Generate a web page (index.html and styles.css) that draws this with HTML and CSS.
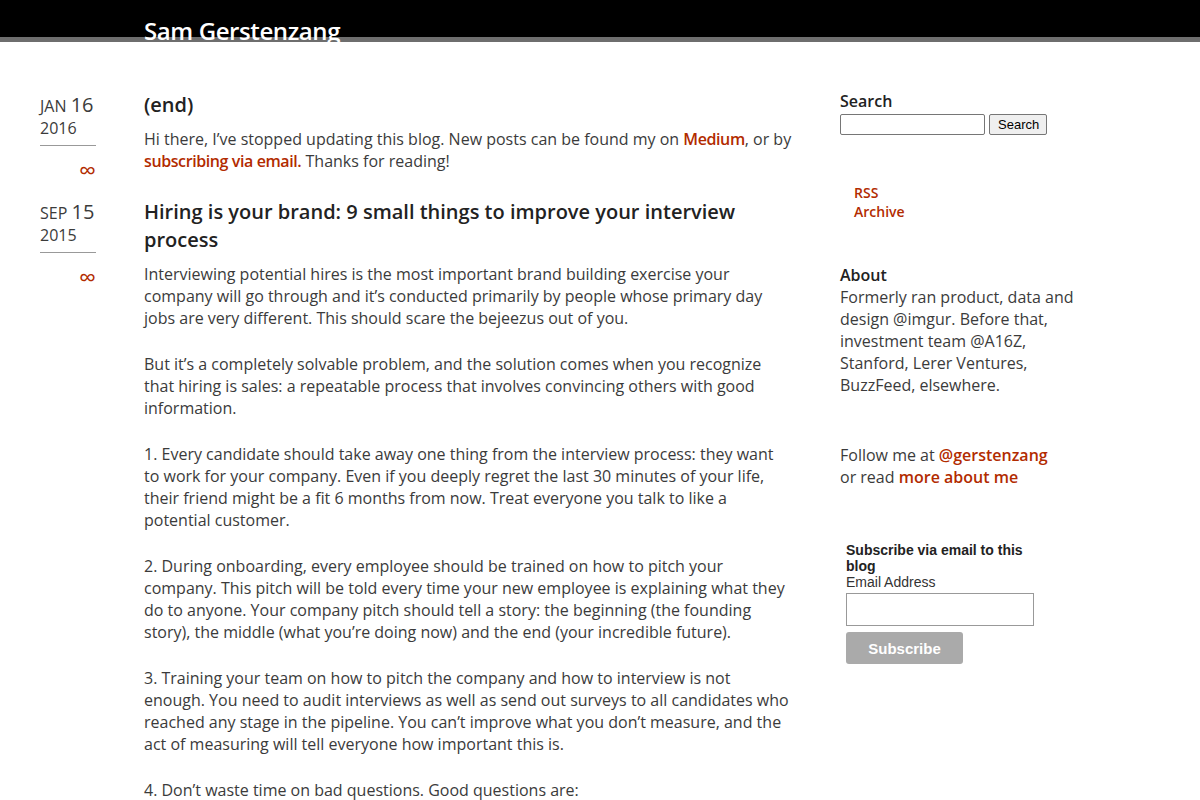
FILE: index.html
```html
<!DOCTYPE html>
<html lang="en">
<head>
    <meta charset="UTF-8">
    <meta name="viewport" content="width=device-width, initial-scale=1.0">
    <title>Sam Gerstenzang</title>
    <link rel="stylesheet" href="styles.css">
</head>
<body>
    <header class="masthead">
        <h1 class="site-title"><a href="/">Sam Gerstenzang</a></h1>
    </header>

    <div class="wrapper">
        <main class="posts">
            <article class="post">
                <div class="post-date">
                    <div class="date-box">
                        <span class="month">Jan</span> <span class="day">16</span><br>
                        <span class="year">2016</span>
                    </div>
                    <a class="permalink" href="#">&infin;</a>
                </div>
                <div class="post-body">
                    <h2>(end)</h2>
                    <p>Hi there, I’ve stopped updating this blog. New posts can be found my on <a href="#">Medium</a>, or by <a href="#">subscribing via email.</a> Thanks for reading!</p>
                </div>
            </article>

            <article class="post">
                <div class="post-date">
                    <div class="date-box">
                        <span class="month">Sep</span> <span class="day">15</span><br>
                        <span class="year">2015</span>
                    </div>
                    <a class="permalink" href="#">&infin;</a>
                </div>
                <div class="post-body">
                    <h2>Hiring is your brand: 9 small things to improve your interview process</h2>
                    <p>Interviewing potential hires is the most important brand building exercise your company will go through and it’s conducted primarily by people whose primary day jobs are very different. This should scare the bejeezus out of you.</p>
                    <p>But it’s a completely solvable problem, and the solution comes when you recognize that hiring is sales: a repeatable process that involves convincing others with good information.</p>
                    <p>1. Every candidate should take away one thing from the interview process: they want to work for your company. Even if you deeply regret the last 30 minutes of your life, their friend might be a fit 6 months from now. Treat everyone you talk to like a potential customer.</p>
                    <p>2. During onboarding, every employee should be trained on how to pitch your company. This pitch will be told every time your new employee is explaining what they do to anyone. Your company pitch should tell a story: the beginning (the founding story), the middle (what you’re doing now) and the end (your incredible future).</p>
                    <p>3. Training your team on how to pitch the company and how to interview is not enough. You need to audit interviews as well as send out surveys to all candidates who reached any stage in the pipeline. You can’t improve what you don’t measure, and the act of measuring will tell everyone how important this is.</p>
                    <p>4. Don’t waste time on bad questions. Good questions are:</p>
                </div>
            </article>
        </main>

        <aside class="sidebar">
            <section class="widget">
                <h3>Search</h3>
                <form class="search-form">
                    <input type="text" name="q">
                    <button type="submit">Search</button>
                </form>
            </section>

            <ul class="side-links">
                <li><a href="#">RSS</a></li>
                <li><a href="#">Archive</a></li>
            </ul>

            <section class="widget about">
                <h3>About</h3>
                <p>Formerly ran product, data and design @imgur. Before that, investment team @A16Z, Stanford, Lerer Ventures, BuzzFeed, elsewhere.</p>
            </section>

            <section class="widget follow">
                <p>Follow me at <a href="#">@gerstenzang</a><br>or read <a href="#">more about me</a></p>
            </section>

            <form class="subscribe">
                <h4>Subscribe via email to this blog</h4>
                <label for="email">Email Address</label>
                <input type="email" id="email" name="email">
                <button type="submit">Subscribe</button>
            </form>
        </aside>
    </div>
</body>
</html>
```

FILE: styles.css
```css
body {
    margin: 0;
    font-family: "Open Sans", sans-serif;
    font-size: 16px;
    line-height: 22px;
    color: #3b3b3b;
    background-color: #fff;
}

a {
    color: #b22b00;
    font-weight: 600;
    text-decoration: none;
}

/* header: black bar with a grey strip, title cut off at the bottom */
.masthead {
    height: 42px;
    overflow: hidden;
    background: linear-gradient(#000 37px, #6e6e6e 37px);
    padding-left: 144px;
}

.site-title {
    margin: 0;
    padding-top: 15px;
    font-size: 24px;
    line-height: 32px;
    font-weight: 600;
    letter-spacing: -0.4px;
}

.site-title a {
    color: #fff;
}

.wrapper {
    display: flex;
    padding: 47px 0 0 40px;
    gap: 48px;
}

.posts {
    width: 600px;
    flex: none;
    display: flex;
    flex-direction: column;
}

.post {
    display: grid;
    grid-template-columns: 56px 648px;
    gap: 48px;
}

.post-date {
    display: flex;
    flex-direction: column;
    padding-top: 5px;
}

.date-box {
    border-bottom: 1px solid #999;
    padding-bottom: 6px;
    text-transform: uppercase;
}

.month {
    font-size: 16px;
}

.day {
    font-size: 20px;
}

.year {
    font-size: 16px;
}

.permalink {
    align-self: flex-end;
    font-size: 24px;
    font-weight: 400;
    line-height: 24px;
    margin-top: 12px;
}

.post-body h2 {
    margin: 2px 0 9px;
    font-size: 20px;
    line-height: 28px;
    font-weight: 600;
    color: #222;
}

.post-body p {
    margin: 0 0 24px;
}

.post-body p a {
    letter-spacing: -0.4px;
}

.sidebar {
    width: 240px;
    padding: 1px 0 0 152px;
    flex: none;
}

.widget h3 {
    margin: 0;
    font-size: 16px;
    line-height: 22px;
    font-weight: 600;
    color: #222;
}

.widget p {
    margin: 0;
}

.search-form {
    display: flex;
    gap: 4px;
    align-items: flex-start;
    margin-top: 2px;
}

.search-form input {
    width: 145px;
    height: 21px;
    box-sizing: border-box;
    border: 1px solid #767676;
    border-radius: 2px;
}

.search-form button {
    font-family: "Liberation Sans", Arial, sans-serif;
    font-size: 13px;
    height: 21px;
    padding: 0 7px 0 8px;
    border: 1px solid #767676;
    border-radius: 2px;
    background: #efefef;
    color: #000;
}

.side-links {
    list-style: none;
    margin: 48px 0 0;
    padding: 0 0 0 14px;
    font-size: 14px;
    line-height: 19px;
}

.about {
    margin-top: 43px;
}

.follow {
    margin-top: 48px;
}

.subscribe {
    margin: 54px 0 0 6px;
    width: 200px;
    font-family: "Liberation Sans", Arial, sans-serif;
    font-size: 14px;
    line-height: 16px;
    color: #222;
    display: flex;
    flex-direction: column;
    align-items: flex-start;
}

.subscribe h4 {
    margin: 0;
    font-size: 14px;
    font-weight: 700;
}

.subscribe label {
    color: #333;
}

.subscribe input {
    width: 188px;
    height: 33px;
    box-sizing: border-box;
    margin-top: 3px;
    border: 1px solid #999;
}

.subscribe button {
    margin-top: 6px;
    width: 117px;
    height: 32px;
    border: none;
    border-radius: 3px;
    background: #aaa;
    color: #fff;
    font-family: "Liberation Sans", Arial, sans-serif;
    font-size: 15px;
    font-weight: 700;
}
```
